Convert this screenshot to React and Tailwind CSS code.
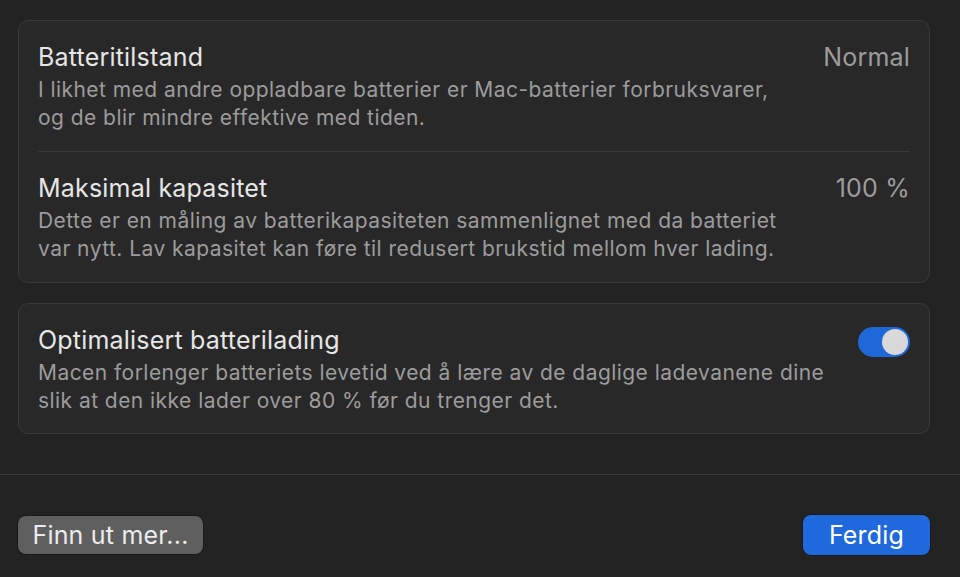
import React from "react";

const FONT = { fontFamily: 'Inter, "Noto Sans", sans-serif' };

function Row({ title, value, desc, children }) {
  return (
    <div className="flex items-start justify-between gap-6">
      <div className="flex flex-col gap-1">
        <p className="text-[25px] leading-[30px] tracking-[0.2px] text-[#e6e6e6]">{title}</p>
        <p className="text-[21px] leading-[28px] tracking-[0.45px] text-[#9c9c9c]">
          {desc[0]}
          <br />
          {desc[1]}
        </p>
      </div>
      {value && (
        <span className="text-[25px] leading-[30px] tracking-[0.2px] text-[#9c9c9c] whitespace-nowrap">{value}</span>
      )}
      {children}
    </div>
  );
}

function Toggle() {
  return (
    <div className="mt-[2px] w-[52px] h-[30px] shrink-0 rounded-full bg-[#1f68d9] flex items-center justify-end px-[2px]">
      <span className="w-[26px] h-[26px] rounded-full bg-[#d9d9d9]" />
    </div>
  );
}

export default function App() {
  return (
    <div className="w-[960px] h-[577px] bg-[#232323] flex flex-col overflow-hidden" style={FONT}>
      <div className="pl-[18px] pr-[30px] pt-[20px] flex flex-col gap-[20px]">
        {/* Battery health card */}
        <section className="rounded-[10px] border border-[#3a3a3a] bg-[#282828] px-[19px]">
          <div className="pt-[21px] pb-[19px] border-b border-[#383838]">
            <Row
              title="Batteritilstand"
              value="Normal"
              desc={[
                "I likhet med andre oppladbare batterier er Mac-batterier forbruksvarer,",
                "og de blir mindre effektive med tiden.",
              ]}
            />
          </div>
          <div className="pt-[21px] pb-[19px]">
            <Row
              title="Maksimal kapasitet"
              value="100 %"
              desc={[
                "Dette er en måling av batterikapasiteten sammenlignet med da batteriet",
                "var nytt. Lav kapasitet kan føre til redusert brukstid mellom hver lading.",
              ]}
            />
          </div>
        </section>

        {/* Optimized charging card */}
        <section className="rounded-[10px] border border-[#3a3a3a] bg-[#282828] px-[19px] pt-[21px] pb-[18px]">
          <Row
            title="Optimalisert batterilading"
            desc={[
              "Macen forlenger batteriets levetid ved å lære av de daglige ladevanene dine",
              "slik at den ikke lader over 80 % før du trenger det.",
            ]}
          >
            <Toggle />
          </Row>
        </section>
      </div>

      <div className="mt-[40px] border-t border-[#3c3c3c]" />

      {/* Footer buttons */}
      <div className="flex items-center justify-between pl-[18px] pr-[30px] pt-[40px]">
        <button className="h-[38px] w-[185px] rounded-[8px] bg-[#5f5f5f] text-[25px] tracking-[0.2px] text-[#ececec] leading-none shadow-[0_0_0_1px_#1a1a1a]">
          Finn ut mer...
        </button>
        <button className="h-[40px] w-[127px] rounded-[8px] bg-[#1f69dd] text-[25px] tracking-[0.2px] text-white leading-none shadow-[0_0_0_1px_#1a1a1a]">
          Ferdig
        </button>
      </div>
    </div>
  );
}
